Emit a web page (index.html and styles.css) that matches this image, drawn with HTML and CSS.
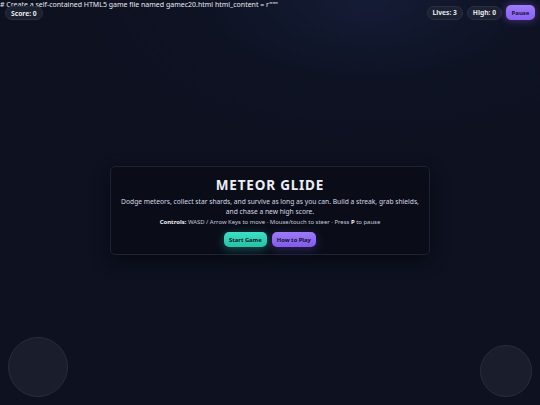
FILE: index.html
```html
<!DOCTYPE html>
<html lang="en">
<head>
<meta charset="utf-8">
<title>Meteor Glide</title>
<link rel="stylesheet" href="styles.css">
</head>
<body>
<div class="prompt"># Create a self-contained HTML5 game file named gamec20.html html_content = r"""</div>
<main class="stage">
  <section class="panel">
    <h1 class="title">METEOR GLIDE</h1>
    <p class="desc">Dodge meteors, collect star shards, and survive as long as you can. Build a streak, grab shields, and chase a new high score.</p>
    <p class="controls"><b>Controls:</b> WASD / Arrow Keys to move · Mouse/touch to steer · Press <b>P</b> to pause</p>
    <div class="actions">
      <button class="btn btn-start">Start Game</button>
      <button class="btn btn-help">How to Play</button>
    </div>
  </section>
</main>
<div class="hud">
  <div class="hud-left"><span class="pill">Score: 0</span></div>
  <div class="hud-right">
    <span class="pill">Lives: 3</span>
    <span class="pill">High: 0</span>
    <button class="pause">Pause</button>
  </div>
</div>
<div class="stick stick-left"></div>
<div class="stick stick-right"></div>
</body>
</html>
```

FILE: styles.css
```css
* { box-sizing: border-box; }
html, body { margin: 0; height: 100%; }
body {
  width: 540px;
  height: 405px;
  overflow: hidden;
  position: relative;
  font-family: "Noto Sans", "Open Sans", sans-serif;
  color: #e6e9f2;
  background:
    radial-gradient(ellipse 300px 150px at 68% 0%, rgba(34, 48, 92, 0.35) 0%, rgba(20, 28, 55, 0.15) 55%, rgba(14, 18, 34, 0) 100%),
    #0d1120;
  display: flex;
  flex-direction: column;
}
.prompt {
  font-size: 7px;
  line-height: 10px;
  color: #e8eaf0;
  white-space: nowrap;
  height: 10px;
}
.stage {
  flex: 1;
  display: flex;
  align-items: center;
  justify-content: center;
  padding-top: 6px;
}
.panel {
  width: 320px;
  background: #0a0d18;
  border: 1px solid #1d2334;
  border-radius: 5px;
  box-shadow: 0 6px 18px rgba(0, 0, 0, 0.45);
  padding: 10px 10px 7px;
  text-align: center;
}
.title {
  margin: 0;
  font-size: 13.5px;
  line-height: 17px;
  font-weight: 700;
  letter-spacing: 0.8px;
  color: #eceef5;
}
.desc {
  margin: 3px 0 0;
  font-size: 6.7px;
  line-height: 9.5px;
  color: #d4d9e6;
}
.controls {
  margin: 2px 0 0;
  font-size: 5.95px;
  line-height: 9px;
  color: #c3c9d8;
}
.controls b { color: #eef0f6; }
.actions {
  margin-top: 5px;
  display: flex;
  justify-content: center;
  gap: 5px;
}
.btn {
  font-family: inherit;
  font-size: 5.8px;
  font-weight: 700;
  height: 15px;
  padding: 0 5px;
  border: none;
  border-radius: 5px;
  color: #0c1222;
  white-space: nowrap;
}
.btn-start {
  background: linear-gradient(180deg, #3ee0c4, #22c3a6);
  box-shadow: 0 2px 10px rgba(45, 212, 191, 0.35);
}
.btn-help {
  background: linear-gradient(180deg, #9b7bf7, #8359ee);
  box-shadow: 0 2px 10px rgba(139, 92, 246, 0.3);
}
.hud {
  position: absolute;
  top: 5px;
  left: 5px;
  right: 5px;
  display: flex;
  justify-content: space-between;
  align-items: flex-start;
}
.hud-left { display: flex; padding-top: 1px; }
.hud-right {
  display: flex;
  gap: 4px;
  align-items: center;
}
.pill {
  display: inline-flex;
  align-items: center;
  height: 14px;
  padding: 0 5px;
  border-radius: 7px;
  background: rgba(32, 37, 52, 0.85);
  border: 1px solid #2a3042;
  font-size: 6.7px;
  font-weight: 700;
  color: #e6e8ef;
  white-space: nowrap;
}
.pause {
  font-family: inherit;
  height: 15px;
  width: 29px;
  padding: 0;
  border: none;
  border-radius: 5px;
  background: linear-gradient(180deg, #9d7df8, #8a61f2);
  box-shadow: 0 0 8px rgba(139, 92, 246, 0.5);
  font-size: 6px;
  font-weight: 700;
  color: #1a1240;
}
.stick {
  position: absolute;
  bottom: 8px;
  border-radius: 50%;
  background: rgba(40, 44, 60, 0.45);
  border: 1px solid #282d3d;
}
.stick-left { left: 8px; width: 60px; height: 60px; }
.stick-right { right: 8px; width: 52px; height: 52px; }
```
